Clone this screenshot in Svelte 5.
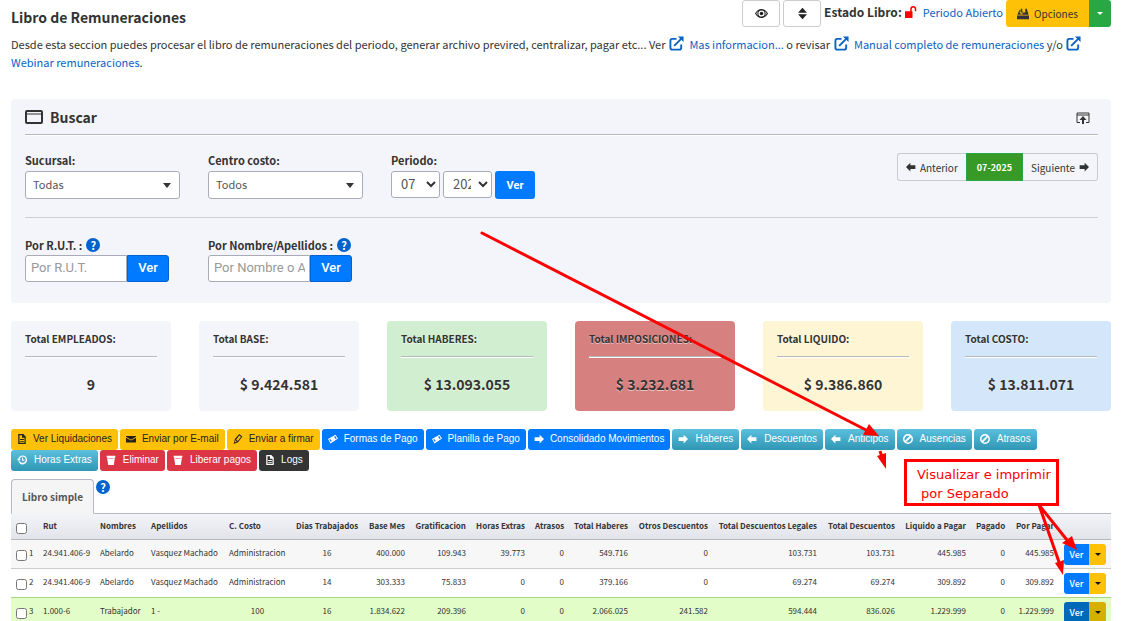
<script lang="ts">
	/**
	 * Libro de Remuneraciones - monthly payroll book
	 * Search filters, period totals, bulk actions and the employee table
	 */

	interface Action {
		label: string;
		icon: string;
		tone: string;
	}

	// Solid 16x16 glyphs
	const icons: Record<string, string> = {
		eye: 'M8 2.500C4.500 2.500 1.800 4.800 0 8c1.800 3.200 4.500 5.500 8 5.500s6.200-2.300 8-5.500c-1.800-3.200-4.500-5.500-8-5.500zM8 4.200a3.800 3.800 0 1 1 0 7.600a3.800 3.800 0 0 1 0-7.600zM4 5a5 5 0 0 0 0 6C3 10.200 2.200 9.200 1.600 8c.6-1.200 1.400-2.200 2.400-3zM12 5a5 5 0 0 1 0 6c1-.8 1.800-1.800 2.400-3c-.6-1.200-1.400-2.200-2.400-3zM8 5.800a2.200 2.200 0 1 0 0 4.400a2.200 2.200 0 0 0 0-4.400z',
		sort: 'M8 1l5.500 6h-11zM2.500 9h11L8 15z',
		unlock: 'M0 7h7V4a4 4 0 0 1 8 0v3h-2V4a2 2 0 0 0-4 0v3h1v9H0z',
		inbox: 'M0 10h16v5H0zM3 3h2.500v3H8L4.300 9L0.600 9zM5 1h2v4h2l-3 4l-3-4h2zM11 1h2l2.500 8h-9L9 6h2z',
		left: 'M7 1v4h8v6H7v4L0 8z',
		right: 'M9 1v4H1v6h8v4l7-7z',
		file: 'M2 0h8l4 4v12H2zM4 2v12h8V6H8V2zM5 8h6v1.500H5zM5 11h6v1.500H5z',
		mail: 'M0 3h16v1.500L8 9L0 4.500zM0 6l8 4.500L16 6v7.500H0z',
		pencil: 'M10 0l5 4l-7 9l-7 3l2-8zM10 2.500L5 9l2.500 2L13 4.500zM3.500 10l-.8 3.500l3.300-1.500z',
		money: 'M0 8L12 1l4 6L4 15zM2 9l2.300 3.500L6 11.300L3.700 8zM11.500 3.300L9.800 4.300l2.400 3.600L14 6.700z',
		ban: 'M8 0a8 8 0 1 1 0 16a8 8 0 0 1 0-16zM8 2.500A5.500 5.500 0 0 0 3.200 10.700L10.700 3.200A5.500 5.500 0 0 0 8 2.500zM12.800 5.300L5.300 12.800A5.500 5.500 0 0 0 12.800 5.300z',
		trash: 'M1 1h14v2.500H1zM2 3.500h12V6L12.500 16h-9L2 6zM4 5v1h8V5z',
		history: 'M9 1a7 7 0 1 1-6.500 9.500l2-.7A5 5 0 1 0 4.200 6H6L3 10L0 6h2.200A7 7 0 0 1 9 1zM8 4h1.700v3.500H12V9H8z'
	};

	const totals = [
		{ label: 'Total EMPLEADOS:', value: '9', tone: 'plain' },
		{ label: 'Total BASE:', value: '$ 9.424.581', tone: 'plain' },
		{ label: 'Total HABERES:', value: '$ 13.093.055', tone: 'green' },
		{ label: 'Total IMPOSICIONES:', value: '$ 3.232.681', tone: 'red' },
		{ label: 'Total LIQUIDO:', value: '$ 9.386.860', tone: 'yellow' },
		{ label: 'Total COSTO:', value: '$ 13.811.071', tone: 'blue' }
	];

	const actions: Action[] = [
		{ label: 'Ver Liquidaciones', icon: 'file', tone: 'warning' },
		{ label: 'Enviar por E-mail', icon: 'mail', tone: 'warning' },
		{ label: 'Enviar a firmar', icon: 'pencil', tone: 'warning' },
		{ label: 'Formas de Pago', icon: 'money', tone: 'primary' },
		{ label: 'Planilla de Pago', icon: 'money', tone: 'primary' },
		{ label: 'Consolidado Movimientos', icon: 'right', tone: 'primary' },
		{ label: 'Haberes', icon: 'right', tone: 'info' },
		{ label: 'Descuentos', icon: 'left', tone: 'info' },
		{ label: 'Anticipos', icon: 'left', tone: 'info' },
		{ label: 'Ausencias', icon: 'ban', tone: 'info' },
		{ label: 'Atrasos', icon: 'ban', tone: 'info' },
		{ label: 'Horas Extras', icon: 'history', tone: 'info' },
		{ label: 'Eliminar', icon: 'trash', tone: 'danger' },
		{ label: 'Liberar pagos', icon: 'trash', tone: 'danger' },
		{ label: 'Logs', icon: 'file', tone: 'dark' }
	];

	// weight is the share of the table width
	const columns = [
		{ label: 'Rut', weight: 57, align: 'start' },
		{ label: 'Nombres', weight: 51, align: 'start' },
		{ label: 'Apellidos', weight: 78, align: 'start' },
		{ label: 'C. Costo', weight: 67, align: 'start' },
		{ label: 'Dias Trabajados', weight: 72, align: 'center' },
		{ label: 'Base Mes', weight: 47, align: 'end' },
		{ label: 'Gratificacion', weight: 61, align: 'end' },
		{ label: 'Horas Extras', weight: 59, align: 'end' },
		{ label: 'Atrasos', weight: 39, align: 'end' },
		{ label: 'Total Haberes', weight: 64, align: 'end' },
		{ label: 'Otros Descuentos', weight: 80, align: 'end' },
		{ label: 'Total Descuentos Legales', weight: 109, align: 'end' },
		{ label: 'Total Descuentos', weight: 78, align: 'end' },
		{ label: 'Liquido a Pagar', weight: 71, align: 'end' },
		{ label: 'Pagado', weight: 39, align: 'end' },
		{ label: 'Por Pagar', weight: 49, align: 'end' }
	];
	const checkWeight = 27;
	const menuWeight = 52;
	const totalWeight = columns.reduce((sum, c) => sum + c.weight, checkWeight + menuWeight);
	const share = (weight: number) => `${(weight / totalWeight) * 100}%`;

	const rows = [
		['24.941.406-9', 'Abelardo', 'Vasquez Machado', 'Administracion', '16', '400.000', '109.943', '39.773', '0', '549.716', '0', '103.731', '103.731', '445.985', '0', '445.985'],
		['24.941.406-9', 'Abelardo', 'Vasquez Machado', 'Administracion', '14', '303.333', '75.833', '0', '0', '379.166', '0', '69.274', '69.274', '309.892', '0', '309.892'],
		['1.000-6', 'Trabajador', '1 -', '100', '16', '1.834.622', '209.396', '0', '0', '2.066.025', '241.582', '594.444', '836.026', '1.229.999', '0', '1.229.999']
	];

	let active = $state(2);

	const cellAlign = (text: string, i: number) =>
		i === 3 && /^\d+$/.test(text) ? 'center' : columns[i].align;
</script>

{#snippet icon(name: string)}
	<svg class="icon" viewBox="0 0 16 16" fill="currentColor" fill-rule="evenodd" aria-hidden="true">
		<path d={icons[name]} />
	</svg>
{/snippet}

{#snippet external()}
	<svg class="external" viewBox="0 0 16 16" fill="none" stroke="currentColor" stroke-width="2" aria-hidden="true">
		<path d="M8 3H3.500Q1.500 3 1.500 5v7.500q0 2 2 2H11q2 0 2-2V9M5.500 10.500L13.500 2.500" />
		<path d="M9.500 0.500H15.500V6.500z" fill="currentColor" stroke="none" />
	</svg>
{/snippet}

{#snippet help()}
	<button class="help" aria-label="Ayuda">?</button>
{/snippet}

{#snippet caret()}
	<svg class="caret" viewBox="0 0 8 4" preserveAspectRatio="none" fill="currentColor" aria-hidden="true"><path d="M0 0h8L4 4z" /></svg>
{/snippet}

{#snippet chevron()}
	<svg class="chevron" viewBox="0 0 10 7" fill="none" stroke="currentColor" stroke-width="2" aria-hidden="true">
		<path d="M1 1l4 4l4-4" />
	</svg>
{/snippet}

<main>
	<header>
		<h1>Libro de Remuneraciones</h1>
		<div class="status">
			<button class="square" aria-label="Mostrar">{@render icon('eye')}</button>
			<button class="square" aria-label="Ordenar">{@render icon('sort')}</button>
			<strong>Estado Libro:</strong>
			<span class="lock">{@render icon('unlock')}</span>
			<a href="#periodo">Periodo Abierto</a>
			<div class="split">
				<button class="options">{@render icon('inbox')}Opciones</button>
				<button class="more" aria-label="Mas opciones">{@render caret()}</button>
			</div>
		</div>
	</header>

	<p class="intro">
		Desde esta seccion puedes procesar el libro de remuneraciones del periodo, generar archivo previred, centralizar, pagar etc... Ver
		<a href="#informacion">{@render external()} Mas informacion...</a> o revisar
		<a href="#manual">{@render external()} Manual completo de remuneraciones</a> y/o
		<a href="#webinar">{@render external()} Webinar remuneraciones</a>.
	</p>

	<section class="search">
		<div class="search-head">
			<svg class="window" viewBox="0 0 18 14" fill="none" stroke="currentColor" aria-hidden="true">
				<rect x="1" y="1" width="16" height="12" rx="1" stroke-width="2" />
				<path d="M1 4h16" />
			</svg>
			<h2>Buscar</h2>
			<button class="collapse" aria-label="Contraer">
				<svg viewBox="0 0 14 12" fill="none" stroke="currentColor" aria-hidden="true">
					<path d="M4 10.500H1V1h12v9.500h-3M1 3h12" />
					<path d="M7 4L10.500 8H8v4H6V8H3.500z" fill="currentColor" stroke="none" />
				</svg>
			</button>
		</div>

		<div class="filters top">
			<div class="field">
				<div class="caption"><label for="sucursal">Sucursal:</label></div>
				<div class="select wide">
					<select id="sucursal"><option>Todas</option></select>
					{@render caret()}
				</div>
			</div>
			<div class="field">
				<div class="caption"><label for="centro">Centro costo:</label></div>
				<div class="select wide">
					<select id="centro"><option>Todos</option></select>
					{@render caret()}
				</div>
			</div>
			<div class="field">
				<div class="caption"><label for="mes">Periodo:</label></div>
				<div class="period">
					<div class="select short">
						<select id="mes"><option>07</option></select>
						{@render chevron()}
					</div>
					<div class="select short">
						<select aria-label="Año"><option>2025</option></select>
						{@render chevron()}
					</div>
					<button class="go">Ver</button>
				</div>
			</div>
			<nav class="pager">
				<button>{@render icon('left')}Anterior</button>
				<button class="current">07-2025</button>
				<button>Siguiente{@render icon('right')}</button>
			</nav>
		</div>

		<div class="filters bottom">
			<div class="field">
				<div class="caption"><label for="rut">Por R.U.T. :</label>{@render help()}</div>
				<div class="lookup"><input id="rut" placeholder="Por R.U.T." /><button>Ver</button></div>
			</div>
			<div class="field">
				<div class="caption"><label for="nombre">Por Nombre/Apellidos :</label>{@render help()}</div>
				<div class="lookup"><input id="nombre" placeholder="Por Nombre o Apellido" /><button>Ver</button></div>
			</div>
		</div>
	</section>

	<section class="totals">
		{#each totals as total}
			<div class="card {total.tone}">
				<h3>{total.label}</h3>
				<p>{total.value}</p>
			</div>
		{/each}
	</section>

	<div class="actions">
		{#each actions as action}
			<button class={action.tone}>{@render icon(action.icon)}{action.label}</button>
		{/each}
	</div>

	<div class="tabs">
		<button class="tab">Libro simple</button>
		{@render help()}
	</div>

	<table>
		<colgroup>
			<col style="width: {share(checkWeight)}" />
			{#each columns as column}
				<col style="width: {share(column.weight)}" />
			{/each}
			<col style="width: {share(menuWeight)}" />
		</colgroup>
		<thead>
			<tr>
				<th class="check"><input type="checkbox" aria-label="Seleccionar todos" /></th>
				{#each columns as column}
					<th class={column.align}>{column.label}</th>
				{/each}
				<th></th>
			</tr>
		</thead>
		<tbody>
			{#each rows as row, r}
				<tr class:active={r === active} class:before={r === active - 1} onmouseenter={() => (active = r)}>
					<td class="check">
						<label><input type="checkbox" /><span>{r + 1}</span></label>
					</td>
					{#each row as cell, i}
						<td class={cellAlign(cell, i)}>{cell}</td>
					{/each}
					<td class="menu">
						<div class="row-menu">
							<button class="view">Ver</button>
							<button class="drop" aria-label="Mas acciones">{@render caret()}</button>
						</div>
					</td>
				</tr>
			{/each}
		</tbody>
	</table>

	<!-- Callout and arrows drawn over the page -->
	<svg class="notes" viewBox="0 0 1130 621" fill="none" stroke="#f00" stroke-width="3">
		<path d="M482 233L868 431" stroke-linecap="round" />
		<path d="M879 436L863 435L869 424z" fill="#f00" stroke="none" />
		<path d="M880 451L882 457" />
		<path d="M886 469L877 456L886 453z" fill="#f00" stroke="none" />
		<path d="M1039 505L1067 540M1039 505L1059 562" />
		<path d="M1077 550L1062 543L1072 536z" fill="#f00" stroke="none" />
		<path d="M1063 575L1055 563L1064 560z" fill="#f00" stroke="none" />
		<rect x="905.500" y="460.500" width="152" height="44" fill="#fff" />
		<text x="917" y="479">Visualizar e imprimir</text>
		<text x="921" y="498">por Separado</text>
	</svg>
</main>

<style>
	:global(body) {
		background: #fff;
	}

	main {
		position: relative;
		padding: 0 19px 0 11px;
		font-family: 'Noto Sans CJK JP', 'Noto Sans', sans-serif;
		font-size: 11px;
		line-height: 18px;
		color: #333;
	}

	h1,
	h2,
	h3,
	p {
		margin: 0;
	}

	a {
		color: #0b62c4;
		text-decoration: none;
	}

	button,
	input,
	select {
		box-sizing: border-box;
		margin: 0;
		font-family: inherit;
		color: inherit;
	}

	button {
		display: inline-flex;
		align-items: center;
		justify-content: center;
		padding: 0;
		border: 0;
		cursor: pointer;
		white-space: nowrap;
	}

	.icon {
		width: 10px;
		height: 10px;
		flex-shrink: 0;
	}

	.caret {
		width: 8px;
		height: 4px;
	}

	header {
		display: flex;
		justify-content: space-between;
		height: 35px;
	}

	h1 {
		padding-top: 8px;
		font-size: 14px;
		line-height: 18px;
	}

	.status {
		display: flex;
		align-items: center;
		height: 27px;
		gap: 3px;
	}

	.status strong,
	.status a {
		padding-bottom: 3px;
		font-size: 12px;
	}

	.status a {
		font-size: 11px;
	}

	.square {
		width: 38px;
		height: 27px;
		background: #fff;
		border: 1px solid #ccc;
		border-radius: 3px;
		color: #222;
	}

	.square .icon {
		width: 13px;
		height: 13px;
	}

	.lock {
		display: flex;
		margin-right: 3px;
		padding-bottom: 3px;
		color: #f00;
	}

	.lock .icon {
		width: 12px;
		height: 12px;
	}

	.split {
		display: flex;
		height: 27px;
	}

	.options {
		gap: 5px;
		width: 83px;
		background: #ffc107;
		border-radius: 3px 0 0 3px;
		font-size: 10px;
	}

	.options .icon {
		width: 12px;
		height: 12px;
	}

	.more {
		width: 22px;
		background: #28a745;
		border-radius: 0 3px 3px 0;
		color: #fff;
	}

	.more .caret {
		width: 6px;
		height: 3px;
	}

	.external {
		width: 15px;
		height: 15px;
		margin: 0 3px 0 1px;
		vertical-align: -2px;
	}

	.search {
		margin-top: 28px;
		padding: 0 13px 21px 14px;
		background: #f4f5fa;
		border-radius: 4px;
	}

	.search-head {
		display: flex;
		align-items: center;
		gap: 7px;
		height: 35px;
		border-bottom: 1px solid #b5b8b8;
		box-shadow: 0 1px #fff;
	}

	.window {
		width: 18px;
		height: 14px;
	}

	h2 {
		font-size: 14px;
	}

	.collapse {
		margin: 3px 8px 0 auto;
		background: none;
	}

	.collapse svg {
		width: 14px;
		height: 12px;
	}

	.filters {
		display: flex;
	}

	.filters.top {
		gap: 28px;
		padding: 17px 0 18px;
		border-bottom: 1px solid #cdd0d2;
	}

	.filters.bottom {
		gap: 39px;
		padding-top: 18px;
	}

	label,
	.caption {
		display: flex;
		align-items: center;
		gap: 4px;
		font-weight: 700;
	}

	.caption {
		box-sizing: border-box;
		height: 19px;
		padding-bottom: 2px;
	}

	.help {
		width: 14px;
		height: 14px;
		background: #0062cc;
		border-radius: 50%;
		font-size: 11px;
		line-height: 14px;
		font-weight: 700;
		color: #fff;
	}

	.select {
		display: grid;
		align-items: center;
	}

	.select > :global(*) {
		grid-area: 1 / 1;
	}

	select,
	.lookup input {
		background: #fff;
		border: 1px solid #a9acb8;
		border-radius: 3px;
		color: #555;
	}

	select {
		appearance: none;
		width: 100%;
		height: 28px;
		padding: 0 18px 2px 7px;
		font-size: 11px;
	}

	.select .caret,
	.chevron {
		justify-self: end;
		margin-right: 9px;
		color: #333;
		pointer-events: none;
	}

	.select .caret {
		height: 5px;
	}

	.wide {
		width: 155px;
	}

	.short {
		width: 49px;
	}

	.short select {
		height: 27px;
		padding: 0 20px 2px 9px;
		font-size: 13px;
	}

	.chevron {
		width: 10px;
		height: 7px;
		margin-right: 4px;
	}

	.period {
		display: flex;
		gap: 3px;
	}

	.period .select {
		align-items: start;
	}

	.period .chevron {
		margin-top: 10px;
	}

	.go {
		width: 40px;
		height: 28px;
		background: #007bff;
		border-radius: 3px;
		font-family: Roboto, sans-serif;
		font-size: 11px;
		font-weight: 700;
		color: #fff;
	}

	.pager {
		display: flex;
		height: 28px;
		margin: 1px 0 0 auto;
	}

	.pager button {
		gap: 4px;
		padding: 0 8px;
		background: transparent;
		border: 1px solid #c8cbcf;
		font-size: 10px;
	}

	.pager button:first-child {
		border-right: 0;
		border-radius: 3px 0 0 3px;
	}

	.pager button:last-child {
		border-left: 0;
		border-radius: 0 3px 3px 0;
	}

	.pager .current {
		padding: 0 10px;
		background: #379a26;
		border-color: #28a745;
		font-size: 9px;
		font-weight: 700;
		color: #fff;
	}

	.lookup {
		display: flex;
		height: 27px;
	}

	.lookup input {
		width: 102px;
		padding: 0 4px 2px 5px;
		border-radius: 3px 0 0 3px;
		font-family: Roboto, 'Liberation Sans', sans-serif;
		font-size: 13px;
	}

	.lookup input::placeholder {
		color: #999;
	}

	.lookup button {
		width: 42px;
		padding-bottom: 2px;
		background: #007bff;
		border: 1px solid #0062cc;
		border-radius: 0 3px 3px 0;
		font-family: Roboto, sans-serif;
		font-size: 13px;
		font-weight: 500;
		color: #fff;
	}

	.filters.top .caption {
		height: 20px;
	}

	.filters.top {
		padding-top: 16px;
	}

	.filters.top .pager {
		margin-top: 2px;
	}

	.totals {
		display: grid;
		grid-template-columns: repeat(6, 1fr);
		gap: 28px;
		margin-top: 18px;
	}

	.card {
		height: 90px;
		box-sizing: border-box;
		padding: 9px 14px 0;
		border-radius: 4px;
		text-shadow: 0 1px #fff8;
	}

	.plain {
		background: #f4f5fa;
	}

	.green {
		background: #d2eed0;
	}

	.red {
		background: #d68080;
	}

	.yellow {
		background: #fef5d4;
	}

	.blue {
		background: #d4e6fa;
	}

	.card h3 {
		height: 26px;
		border-bottom: 1px solid #b5b8b8;
		box-shadow: 0 1px #fff;
		font-size: 10px;
		white-space: nowrap;
	}

	.card p {
		padding-top: 18px;
		font-size: 14px;
		font-weight: 700;
		text-align: center;
	}

	.actions {
		display: flex;
		flex-wrap: wrap;
		column-gap: 2px;
		margin-top: 18px;
	}

	.actions button {
		gap: 6px;
		height: 21px;
		padding: 0 6px 2px;
		border-radius: 3px;
		font-family: 'Liberation Sans', Arial, sans-serif;
		font-size: 10px;
		color: #fff;
	}

	.actions .warning {
		background: #ffc107;
		color: #222;
	}

	.primary {
		background: #007bff;
	}

	.actions .info,
	.actions .danger {
		gap: 7px;
	}

	.info {
		background: linear-gradient(#5bc0de, #2f96b4);
	}

	.danger {
		background: #dc3545;
	}

	.dark {
		background: #343434;
	}

	.tabs {
		display: flex;
		align-items: flex-start;
		gap: 2px;
		margin-top: 8px;
		border-bottom: 1px solid #b5b8c8;
	}

	.tabs .help {
		margin-top: 1px;
	}

	.tab {
		height: 35px;
		margin-bottom: -1px;
		padding: 0 10px;
		background: #f5f5f5;
		border: 1px solid #b5b8c8;
		border-bottom-color: #f5f5f5;
		border-radius: 4px 4px 0 0;
		font-size: 10px;
		font-weight: 700;
		color: #555;
	}

	table {
		width: 100%;
		table-layout: fixed;
		border-collapse: collapse;
		font-size: 8px;
		line-height: 12px;
	}

	th,
	td {
		padding: 0 5px 2px;
		white-space: nowrap;
	}

	th {
		height: 23px;
		background: linear-gradient(#f3f4f8, #e2e4ea);
		border-bottom: 1px solid #b5b8c0;
	}

	td {
		height: 26px;
		border-bottom: 1px solid #ccc;
	}

	tbody tr:nth-child(odd) {
		background: #f7f7f7;
	}

	tbody tr.active {
		background: #e3fdc9;
	}

	.before td,
	.active td {
		border-bottom-color: #a5d67e;
	}

	.start {
		text-align: left;
	}

	.center {
		text-align: center;
	}

	.end {
		text-align: right;
	}

	.check {
		padding: 2px 0 0 5px;
		text-align: left;
	}

	.check label {
		gap: 2px;
		font-weight: 400;
	}

	.check span {
		padding-bottom: 4px;
	}

	.check input {
		width: 11px;
		height: 11px;
		vertical-align: bottom;
	}

	.menu {
		padding: 0 5px;
	}

	.row-menu {
		display: flex;
		height: 21px;
	}

	.view {
		width: 25px;
		background: #007bff;
		border-radius: 3px 0 0 3px;
		font-size: 9px;
		font-weight: 500;
		color: #fff;
	}

	.drop {
		width: 17px;
		background: #ffc107;
		border-radius: 0 3px 3px 0;
		color: #111;
	}

	.drop .caret {
		width: 6px;
		height: 3px;
	}

	.active .view {
		background: #0069b8;
	}

	.active .drop {
		background: #d6b000;
	}

	.notes {
		position: absolute;
		top: 0;
		left: 0;
		width: 1130px;
		height: 621px;
		pointer-events: none;
	}

	.notes text {
		font-family: 'DejaVu Sans', Verdana, sans-serif;
		font-size: 13px;
		fill: #f00;
		stroke: none;
	}
</style>
